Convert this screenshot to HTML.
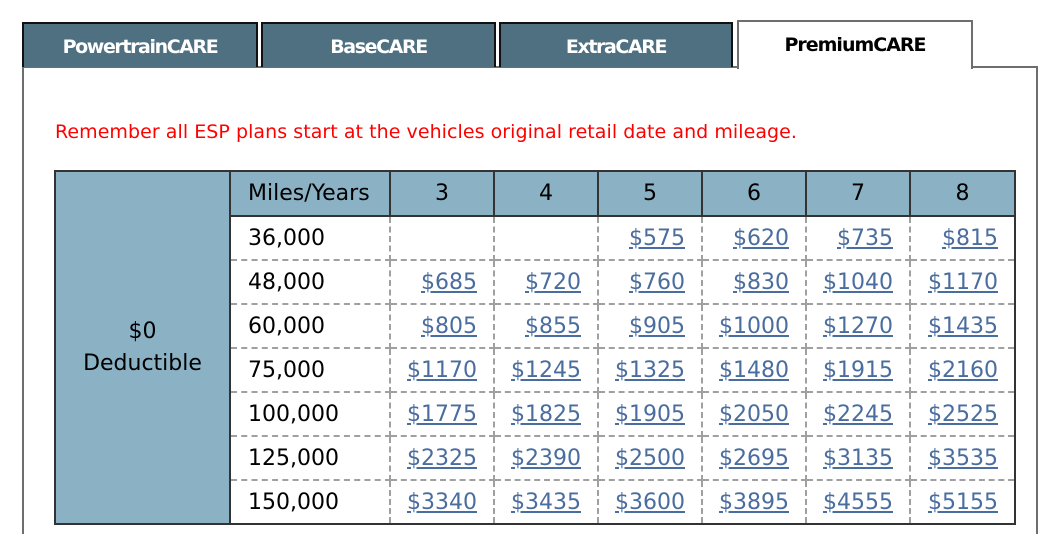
<!DOCTYPE html>
<html><head><style>
html,body{margin:0;width:1054px;height:534px;overflow:hidden}
body{background:#fff;position:relative;font-family:"DejaVu Sans",Verdana,sans-serif}
.tab{position:absolute;top:22px;height:43px;background:#4e7080;border:2px solid #111;border-bottom:none;color:#fff;font-weight:bold;font-size:19px;letter-spacing:-1.4px;text-align:center;line-height:46px;box-sizing:content-box}
.act{position:absolute;left:737px;top:20px;width:232px;height:47px;border:2px solid #6e6e6e;border-bottom:none;background:#fff;color:#000;font-weight:bold;font-size:19px;letter-spacing:-1px;text-align:center;line-height:46px}
.panel{position:absolute;left:22px;top:66px;width:1012px;height:466px;border:2px solid #6e6e6e;border-bottom:none}
.msg{position:absolute;left:55px;top:121px;color:#f00;font-size:19px;white-space:nowrap;letter-spacing:0.05px}
table{position:absolute;left:54px;top:170px;border-collapse:collapse;table-layout:fixed;font-size:22px}
td{padding:0;height:44px;border:2px dashed #a0a0a0;text-align:right;padding-right:16px;box-sizing:border-box}
th{font-weight:normal;height:45px;background:#8ab1c4;border:2px solid #333;text-align:center;box-sizing:border-box}
td.m{text-align:left;padding-left:17px;padding-right:0;border-left:2px solid #333}
td.l{background:#8ab1c4;border:2px solid #333;text-align:center;padding:0;vertical-align:middle;line-height:32px}
a{color:#4a6d9f;text-decoration:underline}
tr td:last-child{border-right:2px solid #333}
tr:last-child td{border-bottom:2px solid #333}
</style></head><body>
<div class="panel"></div>
<div class="tab" style="left:22px;width:232px">PowertrainCARE</div>
<div class="tab" style="left:261px;width:231px">BaseCARE</div>
<div class="tab" style="left:499px;width:230px">ExtraCARE</div>
<div class="act">PremiumCARE</div>
<div class="msg">Remember all ESP plans start at the vehicles original retail date and mileage.</div>
<table>
<colgroup><col style="width:175px"><col style="width:160px"><col style="width:104px"><col style="width:104px"><col style="width:104px"><col style="width:104px"><col style="width:104px"><col style="width:105px"></colgroup>
<tr><th style="border-bottom:none"></th><th style="text-align:left;padding-left:17px">Miles/Years</th><th>3</th><th>4</th><th>5</th><th>6</th><th>7</th><th>8</th></tr>
<tr><td class="l" rowspan="7" style="border-top:none;padding-bottom:44px">$0<br>Deductible</td><td class="m">36,000</td><td></td><td></td><td><a>$575</a></td><td><a>$620</a></td><td><a>$735</a></td><td><a>$815</a></td></tr>
<tr><td class="m">48,000</td><td><a>$685</a></td><td><a>$720</a></td><td><a>$760</a></td><td><a>$830</a></td><td><a>$1040</a></td><td><a>$1170</a></td></tr>
<tr><td class="m">60,000</td><td><a>$805</a></td><td><a>$855</a></td><td><a>$905</a></td><td><a>$1000</a></td><td><a>$1270</a></td><td><a>$1435</a></td></tr>
<tr><td class="m">75,000</td><td><a>$1170</a></td><td><a>$1245</a></td><td><a>$1325</a></td><td><a>$1480</a></td><td><a>$1915</a></td><td><a>$2160</a></td></tr>
<tr><td class="m">100,000</td><td><a>$1775</a></td><td><a>$1825</a></td><td><a>$1905</a></td><td><a>$2050</a></td><td><a>$2245</a></td><td><a>$2525</a></td></tr>
<tr><td class="m">125,000</td><td><a>$2325</a></td><td><a>$2390</a></td><td><a>$2500</a></td><td><a>$2695</a></td><td><a>$3135</a></td><td><a>$3535</a></td></tr>
<tr><td class="m">150,000</td><td><a>$3340</a></td><td><a>$3435</a></td><td><a>$3600</a></td><td><a>$3895</a></td><td><a>$4555</a></td><td><a>$5155</a></td></tr>
</table>
</body></html>
